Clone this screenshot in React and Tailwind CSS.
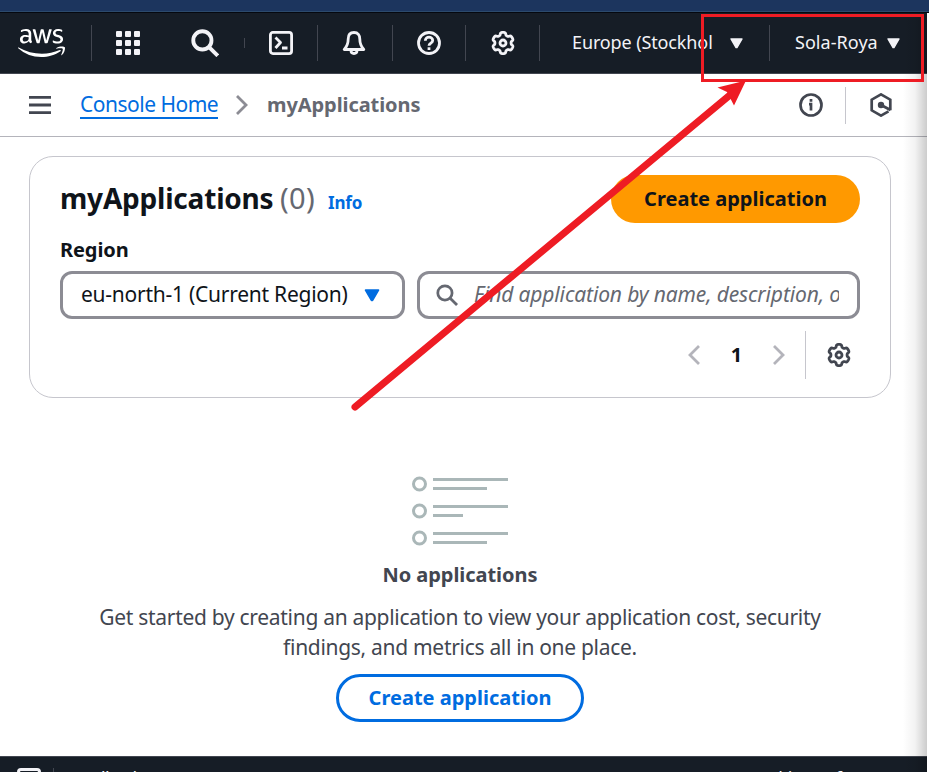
import React from "react";
import { FaAws } from "react-icons/fa";

const FONT = "font-['Noto_Sans','Open_Sans',sans-serif]";

// Six-lobed gear outline, sampled in polar coordinates around (12, 12).
const GEAR_POINTS = Array.from({ length: 180 }, (_, i) => {
  const t = (i / 180) * Math.PI * 2;
  const r = 9.3 + 1.3 * Math.tanh(2.2 * Math.cos(6 * t) + 0.5);
  return `${(12 + r * Math.sin(t)).toFixed(2)},${(12 - r * Math.cos(t)).toFixed(2)}`;
}).join(" ");

function Gear({ className }) {
  return (
    <svg viewBox="0 0 24 24" fill="none" stroke="currentColor" strokeWidth="2.800" strokeLinejoin="round" className={className}>
      <polygon points={GEAR_POINTS} />
      <circle cx="12" cy="12" r="3" />
    </svg>
  );
}

function Search({ className, strokeWidth }) {
  return (
    <svg viewBox="0 0 16 16" fill="none" stroke="currentColor" strokeWidth={strokeWidth} className={className}>
      <circle cx="6.500" cy="6.500" r="5.200" />
      <path d="m10.300 10.300 5 5" />
    </svg>
  );
}

function Triangle({ className }) {
  return (
    <svg viewBox="0 0 14 12" fill="currentColor" stroke="currentColor" strokeWidth="1.500" strokeLinejoin="round" className={className}>
      <path d="M1 1h12L7.500 10.500h-1Z" />
    </svg>
  );
}

function Chevron({ className, left }) {
  return (
    <svg viewBox="0 0 12 20" fill="none" stroke="currentColor" strokeWidth="2.800" className={className}>
      <path d={left ? "M11 1 2 10l9 9" : "m1 1 9 9-9 9"} />
    </svg>
  );
}

function Cell({ width, divider = true, children }) {
  return (
    <div className={`flex h-9 shrink-0 items-center justify-center ${width} ${divider ? "border-r border-[#424650]" : ""}`}>
      {children}
    </div>
  );
}

function TopBar() {
  return (
    <nav className="flex h-[61px] w-[927px] shrink-0 items-center border-b border-[#424650] bg-[#161d26] text-[#f3f3f7]">
      <div className="flex h-9 w-[92px] items-center border-r border-[#424650] pl-[18px]">
        <FaAws className="h-[38px] w-[47px] text-white" />
      </div>
      <Cell width="w-[72px]" divider={false}>
        <svg viewBox="0 0 24 24" fill="currentColor" className="size-6">
          {[0, 9, 18].map((y) => [0, 9, 18].map((x) => <rect key={`${x}-${y}`} x={x} y={y} width="6" height="6" rx="1" />))}
        </svg>
      </Cell>
      <Cell width="w-[80px]" divider={false}>
        <Search className="ml-[2px] size-7" strokeWidth={2.2} />
      </Cell>
      <div className="h-[10px] w-px bg-[#424650]" />
      <Cell width="w-[73px]">
        <svg viewBox="0 0 24 24" fill="none" stroke="currentColor" strokeWidth="2.800" strokeLinejoin="round" className="size-6">
          <rect x="1.400" y="1.400" width="21.200" height="21.200" rx="2.500" />
          <path d="m6.500 6.500 5 5-5 5.500M13 17h5.500" />
        </svg>
      </Cell>
      <Cell width="w-[75px]">
        <svg viewBox="0 0 24 24" fill="none" stroke="currentColor" strokeWidth="2.800" strokeLinejoin="round" className="mr-[2px] size-6">
          <path d="M12 1.500c-4 0-5.800 2.700-5.800 6.500 0 5.500-1.200 7.500-4 10.500h19.600c-2.800-3-4-5-4-10.500 0-3.800-1.800-6.500-5.800-6.500Z" />
          <path d="M9 19.500c0 4 6 4 6 0" />
        </svg>
      </Cell>
      <Cell width="w-[73px]">
        <svg viewBox="0 0 24 24" fill="none" stroke="currentColor" strokeWidth="2.800" className="size-6">
          <circle cx="12" cy="12" r="10.500" />
          <path d="M8.300 9.800c0-5 7.400-4.600 7.400-.4 0 2.600-3.700 2.700-3.700 5.300" />
          <path d="M12 16.300v2.700" />
        </svg>
      </Cell>
      <Cell width="w-[74px]">
        <Gear className="size-6" />
      </Cell>
      <div className="flex h-9 w-[230px] items-center border-r border-[#424650] pl-8">
        <span className="mb-[2px] w-[157.500px] whitespace-nowrap text-[18px] tracking-[-0.120px]">Europe (Stockhol</span>
        <Triangle className="h-[11px] w-[13px]" />
      </div>
      <div className="flex items-center pl-[25px]">
        <span className="mb-[2px] w-[91.500px] whitespace-nowrap text-[18px] tracking-[0.050px]">Sola-Roya</span>
        <Triangle className="h-[11px] w-[13px]" />
      </div>
    </nav>
  );
}

function Breadcrumbs() {
  return (
    <div className="flex h-[63px] w-[927px] shrink-0 items-center border-b border-[#b4b4bb] pl-[29px] text-[#424650]">
      <svg viewBox="0 0 22 18" fill="currentColor" className="h-[18px] w-[22px]">
        <path d="M0 0h22v2.800H0ZM0 7.600h22v2.800H0ZM0 15.200h22V18H0Z" />
      </svg>
      <a className="ml-[29px] h-[28px] w-[138px] whitespace-nowrap border-b-2 border-[#006ce0] text-[21px] leading-[27px] tracking-[-0.500px] text-[#006ce0]">Console Home</a>
      <Chevron className="ml-[18px] h-[20px] w-[12px] text-[#8c8c94]" />
      <span className="mb-px ml-[19px] w-[532px] whitespace-nowrap text-[20px] font-bold leading-7 tracking-[-0.080px] text-[#656871]">myApplications</span>
      <svg viewBox="0 0 24 24" fill="none" stroke="currentColor" strokeWidth="2.700" className="size-6">
        <circle cx="12" cy="12" r="10.500" />
        <path d="M12 6v2.700M10 11.200h2v6.300" />
      </svg>
      <div className="ml-[22px] h-[37px] w-px bg-[#c6c6cd]" />
      <svg viewBox="0 0 24 24" fill="none" stroke="currentColor" strokeWidth="2.700" className="ml-[23px] size-6">
        <path d="M19.500 18.300 12 22.600l-9.300-5.300V6.700L12 1.400l9.300 5.300v10.500" />
        <circle cx="12" cy="12" r="3.200" fill="currentColor" stroke="none" />
        <path d="m12 12 9.500 5" />
      </svg>
    </div>
  );
}

function ApplicationsCard() {
  return (
    <section className="ml-[29px] mt-[19px] flex h-[242px] w-[862px] shrink-0 flex-col rounded-[24px] border border-[#c6c6cd] px-[30px] pt-[18px] text-[#0f141a]">
      <div className="flex h-12 items-center justify-between">
        <h1 className="mb-[2px] flex items-baseline whitespace-nowrap">
          <span className="w-[220px] text-[28px] font-bold leading-[48px] tracking-[-0.200px]">myApplications</span>
          <span className="w-[48px] text-[29px] leading-[48px] tracking-[0.300px] text-[#656871]">(0)</span>
          <a className="text-[17px] font-bold tracking-[-0.200px] text-[#006ce0]">Info</a>
        </h1>
        <button className="h-12 w-[249px] whitespace-nowrap rounded-full bg-[#ff9900] text-[20px] font-bold">Create application</button>
      </div>
      <div className="mt-[12px] h-[30px] text-[20px] font-bold leading-[30px] tracking-[-0.100px]">Region</div>
      <div className="mt-[6px] flex gap-3">
        <div className="flex h-12 w-[345px] items-center rounded-[12px] border-[3px] border-[#8c8c94] pl-[18px]">
          <span className="w-[283px] whitespace-nowrap text-[21px] tracking-[-0.250px]">eu-north-1 (Current Region)</span>
          <Triangle className="h-[13px] w-[16px] shrink-0 text-[#006ce0]" />
        </div>
        <div className="flex h-12 w-[443px] items-center rounded-[12px] border-[3px] border-[#8c8c94] pl-[16px]">
          <Search className="size-[22px] shrink-0 text-[#656871]" strokeWidth={2} />
          <span className="ml-[16px] w-[365px] overflow-hidden whitespace-nowrap text-[21px] italic tracking-[-0.140px] text-[#656871]">Find application by name, description, or tag</span>
        </div>
      </div>
      <div className="mt-[12px] flex h-12 items-center justify-end pr-[9px]">
        <Chevron left className="h-[20px] w-[12px] text-[#b4b4bb]" />
        <span className="w-[73px] text-center text-[20px] font-bold">1</span>
        <Chevron className="h-[20px] w-[12px] text-[#b4b4bb]" />
        <div className="ml-5 mr-[21px] h-12 w-px bg-[#c6c6cd]" />
        <Gear className="size-6 text-[#424650]" />
      </div>
    </section>
  );
}

function EmptyState() {
  const rows = [[1, 54], [28, 30], [55, 54]];
  return (
    <section className="flex w-[920px] shrink-0 flex-col items-center pt-[78px] text-center text-[#424650]">
      <svg viewBox="0 0 98 70" className="h-[70px] w-[98px]">
        {rows.map(([y, short]) => (
          <g key={y}>
            <circle cx="8.500" cy={y + 7} r="6" fill="none" stroke="#aab7b8" strokeWidth="3" />
            <path d={`M22 ${y + 2.5}h75M22 ${y + 11.5}h${short}`} stroke="#aab7b8" strokeWidth="3" />
          </g>
        ))}
      </svg>
      <h2 className="mt-[14px] text-[20px] font-bold leading-[30px] tracking-[-0.050px]">No applications</h2>
      <p className="mt-[12px] whitespace-nowrap text-[21px] leading-[30px] tracking-[-0.300px]">
        Get started by creating an application to view your application cost, security<br />
        findings, and metrics all in one place.
      </p>
      <button className="mt-[12px] h-12 w-[248px] whitespace-nowrap rounded-full border-[3px] border-[#006ce0] text-[20px] font-bold text-[#006ce0]">Create application</button>
    </section>
  );
}

function Footer() {
  return (
    <footer className="flex h-4 w-[927px] shrink-0 items-start overflow-hidden border-t border-[#424650] bg-[#161d26] text-[18px] leading-[24px] text-[#f3f3f7]">
      <div className="ml-[17px] mt-[11px] h-6 w-6 shrink-0 rounded-[4px] border-[3px] border-[#f3f3f7]" />
      <div className="ml-3 mt-[11px] h-6 w-px bg-[#424650]" />
      <span className="ml-[13px] mt-[9px] w-[678px] tracking-[-0.700px]">Feedback</span>
      <span className="mt-[9px] whitespace-nowrap">Cookie preferences</span>
    </footer>
  );
}

function Annotation() {
  return (
    <svg viewBox="0 0 929 772" className="pointer-events-none absolute inset-0 h-[772px] w-[929px]">
      <rect x="702.500" y="15.500" width="220" height="65" fill="none" stroke="#ee1c24" strokeWidth="3" />
      <path d="M355 407 730 95" stroke="#ee1c24" strokeWidth="7" strokeLinecap="round" />
      <path d="M746 80.500 717.500 87.500 727 92 734 105.500Z" fill="#ee1c24" />
    </svg>
  );
}

export default function App() {
  return (
    <div className={`relative flex h-[772px] w-[929px] flex-col overflow-hidden bg-white ${FONT}`}>
      <div className="h-[12px] shrink-0 border-b border-[#2c4a6c] bg-[#1c355e]" />
      <div className="h-px shrink-0 bg-[#05080f]" />
      <TopBar />
      <Breadcrumbs />
      <ApplicationsCard />
      <EmptyState />
      <div className="flex-1" />
      <Footer />
      <div className="absolute bottom-0 left-[903px] top-[13px] w-6 bg-gradient-to-r from-transparent via-black/5 to-black/20" />
      <Annotation />
    </div>
  );
}
